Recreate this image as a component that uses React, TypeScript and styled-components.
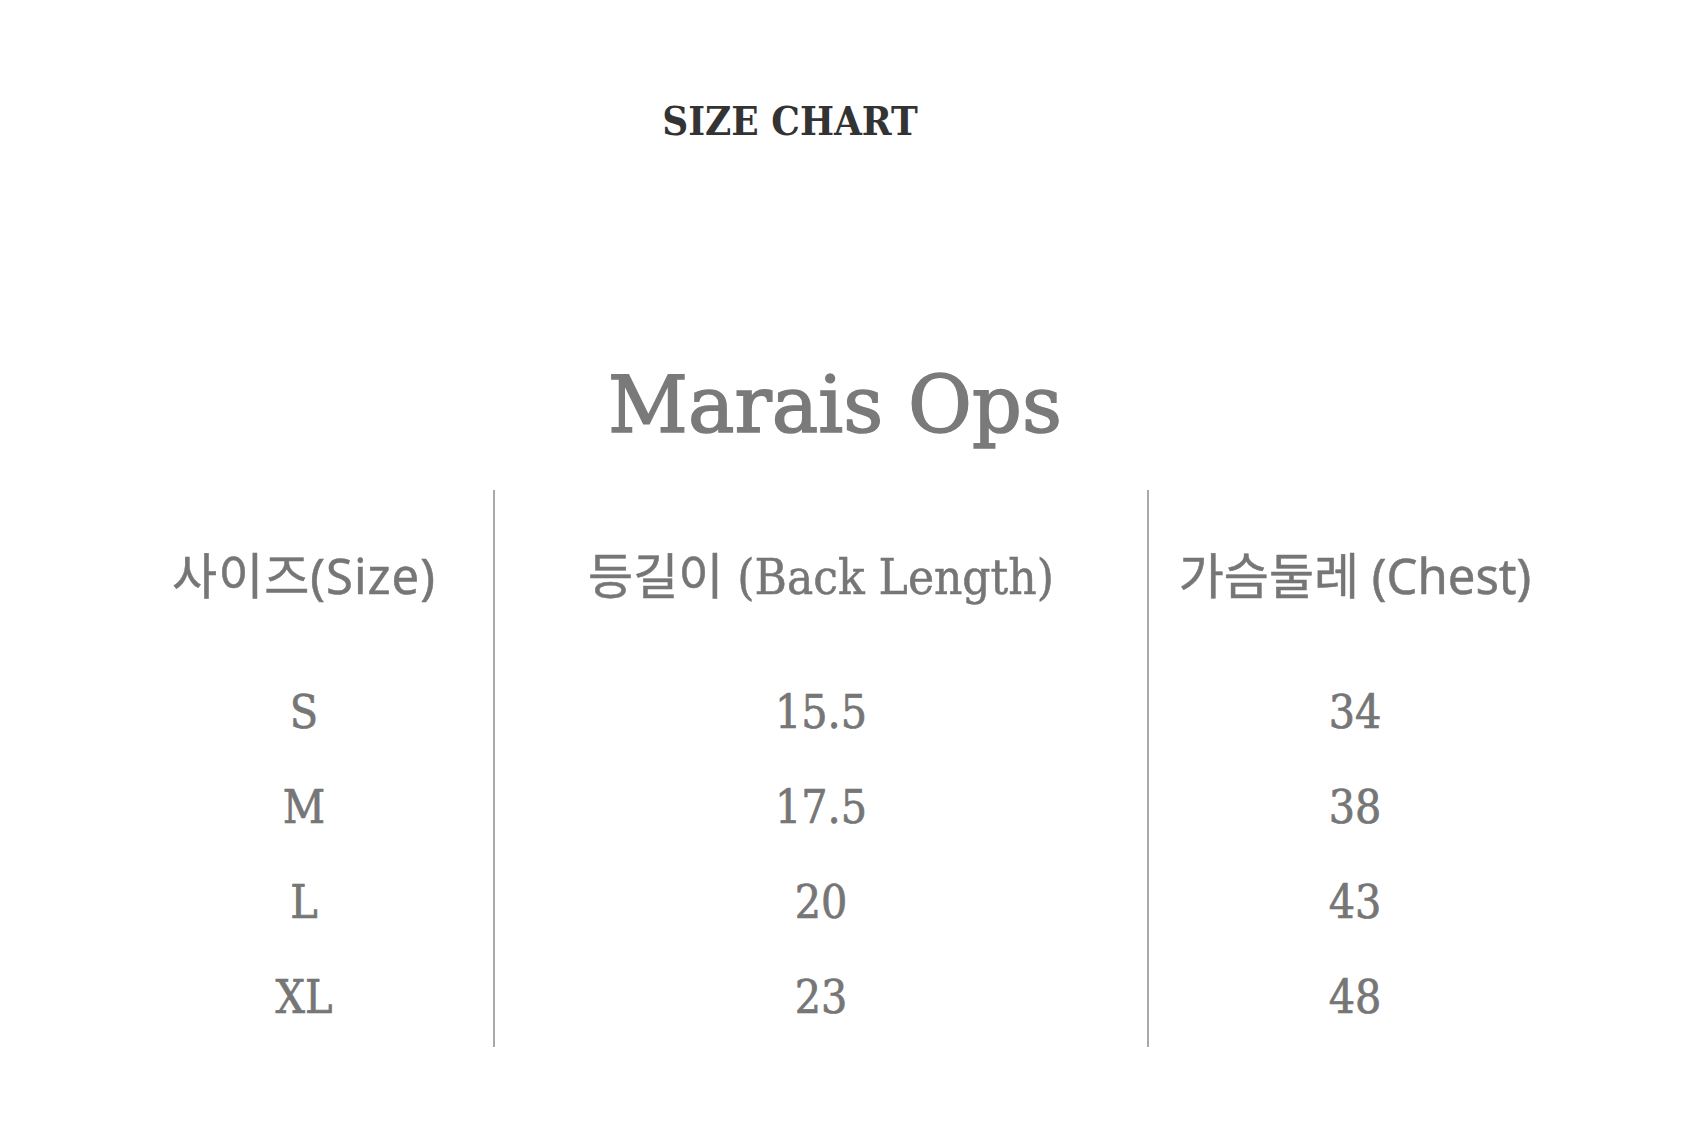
import React, { FC } from 'react';
import styled, { createGlobalStyle } from 'styled-components';

const GlobalStyle = createGlobalStyle`
    html, body {
        margin: 0;
        padding: 0;
        background: #ffffff;
    }
`;

const SLAB = `"DejaVu Serif Condensed", "DejaVu Serif", "Noto Sans CJK KR", serif`;
const SANS = `"Noto Sans", "Noto Sans CJK KR", sans-serif`;

const Page = styled.div`
    width: 1702px;
    min-height: 1142px;
    padding-top: 101px;
    box-sizing: border-box;
    display: flex;
    flex-direction: column;
`;

const Title = styled.h1`
    margin: 0;
    padding-right: 122px;
    text-align: center;
    font-family: ${SLAB};
    font-stretch: condensed;
    font-weight: 700;
    font-size: 40px;
    line-height: 40px;
    color: #333333;
`;

const ProductName = styled.h2`
    margin: 225px 0 0;
    padding-right: 32px;
    text-align: center;
    font-family: "DejaVu Serif", serif;
    font-weight: 400;
    font-size: 78px;
    line-height: 78px;
    color: #7a7a7a;
    -webkit-text-stroke: 1.6px #7a7a7a;
`;

const Table = styled.div`
    margin: 46px 0 0 113px;
    display: grid;
    grid-template-columns: 380px 654px 414px;
`;

const Column = styled.div<{ $divider?: boolean }>`
    display: flex;
    flex-direction: column;
    padding-bottom: 3px;
    border-left: ${({ $divider }) => ($divider ? '2px solid #a9a9a9' : '2px solid transparent')};
`;

const HeadCell = styled.div<{ $font: string; $spacing?: number }>`
    height: 174px;
    box-sizing: border-box;
    padding-bottom: 9px;
    display: flex;
    align-items: center;
    justify-content: center;
    font-family: ${({ $font }) => $font};
    font-size: 49px;
    letter-spacing: ${({ $spacing }) => $spacing ?? 0}px;
    color: #767676;
    -webkit-text-stroke: 0.5px #767676;
    white-space: nowrap;
`;

const Cell = styled.div`
    height: 95px;
    display: flex;
    align-items: center;
    justify-content: center;
    font-family: ${SLAB};
    font-stretch: condensed;
    font-size: 46px;
    color: #767676;
    -webkit-text-stroke: 0.7px #767676;
`;

interface ColumnData {
    title: string;
    font: string;
    spacing?: number;
    values: string[];
}

const columns: ColumnData[] = [
    { title: '사이즈(Size)', font: SANS, spacing: 1, values: ['S', 'M', 'L', 'XL'] },
    { title: '등길이 (Back Length)', font: SLAB, values: ['15.5', '17.5', '20', '23'] },
    { title: '가슴둘레 (Chest)', font: SANS, values: ['34', '38', '43', '48'] }
];

const App: FC = () => {
    return (
        <Page>
            <GlobalStyle />
            <Title>SIZE CHART</Title>
            <ProductName>Marais Ops</ProductName>
            <Table>
                {columns.map((col, i) => (
                    <Column key={col.title} $divider={i > 0}>
                        <HeadCell $font={col.font} $spacing={col.spacing}>
                            {col.title}
                        </HeadCell>
                        {col.values.map((v) => (
                            <Cell key={v}>{v}</Cell>
                        ))}
                    </Column>
                ))}
            </Table>
        </Page>
    );
};

export default App;
